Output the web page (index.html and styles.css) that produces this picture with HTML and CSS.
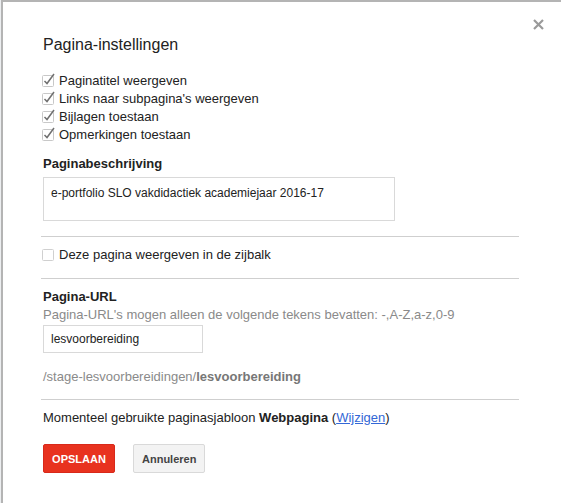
FILE: index.html
```html
<!DOCTYPE html>
<html lang="nl">
<head>
<meta charset="utf-8">
<title>Pagina-instellingen</title>
<link rel="stylesheet" href="styles.css">
</head>
<body>
<div class="dialog">
  <button class="close" aria-label="Sluiten">
    <svg width="11" height="11" viewBox="0 0 11 11"><path d="M1 1 L10 10 M10 1 L1 10" stroke="#9a9a9a" stroke-width="2.2" fill="none"/></svg>
  </button>
  <div class="content">
    <h1 class="title">Pagina-instellingen</h1>
    <ul class="checks">
      <li class="check-row"><span class="cb"><svg width="14" height="14" viewBox="0 0 14 14"><rect x="0.5" y="2.5" width="11" height="11" rx="1" fill="#fff" stroke="#c8c8c8"/><path d="M2.5 8 L5 10.5 L12 1" stroke="#707070" stroke-width="1.5" fill="none"/></svg></span>Paginatitel weergeven</li>
      <li class="check-row"><span class="cb"><svg width="14" height="14" viewBox="0 0 14 14"><rect x="0.5" y="2.5" width="11" height="11" rx="1" fill="#fff" stroke="#c8c8c8"/><path d="M2.5 8 L5 10.5 L12 1" stroke="#707070" stroke-width="1.5" fill="none"/></svg></span>Links naar subpagina's weergeven</li>
      <li class="check-row"><span class="cb"><svg width="14" height="14" viewBox="0 0 14 14"><rect x="0.5" y="2.5" width="11" height="11" rx="1" fill="#fff" stroke="#c8c8c8"/><path d="M2.5 8 L5 10.5 L12 1" stroke="#707070" stroke-width="1.5" fill="none"/></svg></span>Bijlagen toestaan</li>
      <li class="check-row"><span class="cb"><svg width="14" height="14" viewBox="0 0 14 14"><rect x="0.5" y="2.5" width="11" height="11" rx="1" fill="#fff" stroke="#c8c8c8"/><path d="M2.5 8 L5 10.5 L12 1" stroke="#707070" stroke-width="1.5" fill="none"/></svg></span>Opmerkingen toestaan</li>
    </ul>
    <h2 class="label label-desc">Paginabeschrijving</h2>
    <div class="textarea">e-portfolio SLO vakdidactiek academiejaar 2016-17</div>
    <hr class="sep sep-1">
    <div class="check-row sidebar-row"><span class="cb"><svg width="14" height="14" viewBox="0 0 14 14"><rect x="0.5" y="2.5" width="11" height="11" rx="1" fill="#fff" stroke="#d0d0d0"/></svg></span>Deze pagina weergeven in de zijbalk</div>
    <hr class="sep sep-2">
    <h2 class="label label-url">Pagina-URL</h2>
    <p class="hint">Pagina-URL's mogen alleen de volgende tekens bevatten: -,A-Z,a-z,0-9</p>
    <div class="input">lesvoorbereiding</div>
    <p class="path">/stage-lesvoorbereidingen/<b>lesvoorbereiding</b></p>
    <hr class="sep sep-3">
    <p class="template">Momenteel gebruikte paginasjabloon <b>Webpagina</b> (<a href="#">Wijzigen</a>)</p>
    <div class="buttons">
      <button class="btn btn-primary">OPSLAAN</button>
      <button class="btn btn-default">Annuleren</button>
    </div>
  </div>
</div>
</body>
</html>
```
FILE: styles.css
```css
html, body {
  margin: 0;
  padding: 0;
}
body {
  background: #eceef0;
  font-family: "Liberation Sans", Arial, sans-serif;
  font-size: 13px;
  color: #222;
  overflow: hidden;
}
.dialog {
  position: relative;
  margin-left: 1px;
  height: 100vh;
  box-sizing: border-box;
  background: #fff;
  border-top: 2px solid #b4b4b4;
  border-left: 2px solid #b4b4b4;
  padding: 33px 0 0 38px;
}
.content {
  width: 478px;
}
.close {
  position: absolute;
  top: 17px;
  left: 530px;
  border: 0;
  background: none;
  padding: 0;
  width: 11px;
  height: 11px;
  cursor: pointer;
}
.close svg { display: block; }
.title {
  margin: 0 0 17px 2px;
  font-size: 16px;
  line-height: 20px;
  font-weight: normal;
  color: #222;
}
.checks {
  list-style: none;
  margin: 0;
  padding: 0;
}
.check-row {
  display: flex;
  align-items: center;
  line-height: 18px;
  height: 18px;
  color: #222;
}
.cb {
  width: 14px;
  height: 14px;
  margin: -3px 3px 0 1px;
  display: inline-flex;
}
.label {
  margin: 0;
  font-size: 13px;
  line-height: 18px;
  font-weight: bold;
  color: #222;
  padding-left: 2px;
}
.label-desc { margin-top: 11px; }
.textarea {
  margin: 4px 0 0 2px;
  border: 1px solid #d9d9d9;
  padding: 7px 7px 0 7px;
  box-sizing: border-box;
  width: 352px;
  height: 44px;
  font-size: 12px;
  line-height: 16px;
  color: #222;
}
.sep {
  border: 0;
  border-top: 1px solid #cfcfcf;
  margin: 0;
  height: 0;
}
.sep-1 { margin-top: 15px; }
.sidebar-row { margin-top: 9px; }
.sep-2 { margin-top: 14px; }
.label-url { margin-top: 9px; }
.hint {
  margin: 0;
  padding-left: 2px;
  line-height: 18px;
  color: #8a8a8a;
}
.input {
  margin: 1px 0 0 2px;
  width: 160px;
  height: 28px;
  box-sizing: border-box;
  border: 1px solid #d9d9d9;
  padding: 0 7px;
  font-size: 12px;
  line-height: 26px;
  color: #222;
}
.path {
  margin: 15px 0 0 2px;
  line-height: 18px;
  color: #8a8a8a;
}
.path b { color: #777; }
.sep-3 { margin-top: 13px; }
.template {
  margin: 9px 0 0 2px;
  line-height: 18px;
  color: #222;
}
.template a {
  color: #3367d6;
  text-decoration: underline;
}
.buttons {
  display: flex;
  gap: 18px;
  margin: 17px 0 0 2px;
}
.btn {
  height: 29px;
  box-sizing: border-box;
  border-radius: 2px;
  font-family: "Liberation Sans", Arial, sans-serif;
  font-size: 11px;
  font-weight: bold;
  padding: 0 8px;
  min-width: 72px;
  cursor: pointer;
}
.btn-primary {
  background: #e8321f;
  border: 1px solid #d8291a;
  color: #fff;
}
.btn-default {
  background: #f3f3f3;
  border: 1px solid #d9d9d9;
  color: #444;
}
```
